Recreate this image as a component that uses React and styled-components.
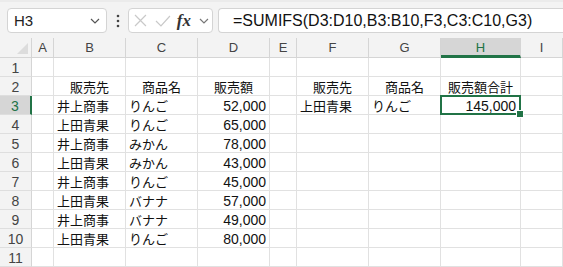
import styled, { createGlobalStyle } from 'styled-components'

const GlobalStyle = createGlobalStyle`
  html, body { margin: 0; padding: 0; background: #fff; }
  body { overflow: hidden; }
`

const GREEN = '#217346'
const COLS = ['A', 'B', 'C', 'D', 'E', 'F', 'G', 'H', 'I']

const Page = styled.div`
  width: 563px;
  height: 267px;
  overflow: hidden;
  background: #fff;
  font-family: 'Liberation Sans', Arial, sans-serif;
`

const Toolbar = styled.div`
  display: flex;
  align-items: center;
  height: 38px;
  box-sizing: border-box;
  padding: 7px 0 6px 7px;
  background: #f3f3f3;
  border-top: 2px solid #ebebeb;
`

const Box = styled.div`
  display: flex;
  align-items: center;
  height: 25px;
  box-sizing: border-box;
  background: #fff;
  border: 1px solid #d4d4d4;
  border-radius: 4px;
`

const NameBox = styled(Box)`
  width: 100px;
  padding: 0 6px 0 6px;
  justify-content: space-between;
  font-size: 15px;
  color: #222;
`

const Dots = styled.div`
  width: 21px;
  display: flex;
  justify-content: center;
`

const FxBox = styled(Box)`
  width: 85px;
  padding: 0 3px 0 5px;
  gap: 8px;
`

const Fx = styled.span`
  font-family: 'Liberation Serif', 'DejaVu Serif', serif;
  font-style: italic;
  font-weight: bold;
  font-size: 17px;
  color: #333;
  margin-left: -2px;
`

const FormulaBox = styled(Box)`
  flex: 1;
  margin-left: 5px;
  padding-left: 14px;
  border-right: none;
  border-radius: 4px 0 0 4px;
  font-size: 16px;
  color: #111;
`

const Grid = styled.div`
  display: grid;
  grid-template-columns: 32px 22px 72px 72px 72px 27px 72px 72px 80px 1fr;
  grid-template-rows: 20px repeat(11, 19px);
`

const Corner = styled.div`
  background: #f3f3f3;
  border-right: 1px solid #d5d5d5;
  border-bottom: 1px solid #d5d5d5;
  position: relative;
  &::after {
    content: '';
    position: absolute;
    right: 3px;
    bottom: 3px;
    border-style: solid;
    border-width: 0 0 11px 11px;
    border-color: transparent transparent #dcdcdc transparent;
  }
`

const ColHead = styled.div`
  display: flex;
  align-items: center;
  justify-content: center;
  box-sizing: border-box;
  background: ${p => (p.$active ? '#d6d6d6' : '#f3f3f3')};
  border-right: 1px solid #d5d5d5;
  border-bottom: ${p => (p.$active ? `3px solid ${GREEN}` : '1px solid #d5d5d5')};
  font-size: 13px;
  color: ${p => (p.$active ? GREEN : '#444')};
  padding-top: ${p => (p.$active ? '2px' : '0')};
`

const RowHead = styled.div`
  display: flex;
  align-items: center;
  justify-content: center;
  box-sizing: border-box;
  background: ${p => (p.$active ? '#d6d6d6' : '#f3f3f3')};
  border-right: ${p => (p.$active ? `2px solid ${GREEN}` : '1px solid #d5d5d5')};
  border-bottom: 1px solid #dedede;
  font-size: 14px;
  color: ${p => (p.$active ? GREEN : '#444')};
  padding-top: 1px;
`

const Cell = styled.div`
  display: flex;
  align-items: center;
  box-sizing: border-box;
  justify-content: ${p => (p.$align === 'right' ? 'flex-end' : p.$align === 'center' ? 'center' : 'flex-start')};
  padding: 1px 3px 0 3px;
  border-right: 1px solid #e1e1e1;
  border-bottom: 1px solid #e1e1e1;
  font-family: ${p => (p.$num ? "'Liberation Sans', Arial, sans-serif" : "'Noto Sans CJK JP', sans-serif")};
  font-size: ${p => (p.$num ? '14px' : '13px')};
  color: #111;
  white-space: nowrap;
  position: relative;
`

const Selected = styled(Cell)`
  border: 2px solid ${GREEN};
  margin: -1px 0 0 -1px;
  padding-right: 3px;
  &::after {
    content: '';
    position: absolute;
    right: -5px;
    bottom: -5px;
    width: 6px;
    height: 6px;
    background: ${GREEN};
    border: 1px solid #fff;
    z-index: 1;
  }
`

const Chevron = ({ color = '#555' }) => (
  <svg width="10" height="6" viewBox="0 0 10 6">
    <path d="M1 1 L5 5 L9 1" fill="none" stroke={color} strokeWidth="1.2" />
  </svg>
)

const rows = [
  [],
  ['', '販売先', '商品名', '販売額', '', '販売先', '商品名', '販売額合計'],
  ['', '井上商事', 'りんご', '52,000', '', '上田青果', 'りんご', '145,000'],
  ['', '上田青果', 'りんご', '65,000'],
  ['', '井上商事', 'みかん', '78,000'],
  ['', '上田青果', 'みかん', '43,000'],
  ['', '井上商事', 'りんご', '45,000'],
  ['', '上田青果', 'バナナ', '57,000'],
  ['', '井上商事', 'バナナ', '49,000'],
  ['', '上田青果', 'りんご', '80,000'],
  [],
]

function renderCell(r, c, value) {
  const key = `${r}-${c}`
  const isNum = /^[\d,]+$/.test(value || '')
  if (r === 2 && c === 7) {
    return (
      <Selected key={key} $align="right" $num>
        {value}
      </Selected>
    )
  }
  const align = r === 1 ? 'center' : isNum ? 'right' : 'left'
  return (
    <Cell key={key} $align={align} $num={isNum}>
      {value}
    </Cell>
  )
}

export default function App() {
  return (
    <Page>
      <GlobalStyle />
      <Toolbar>
        <NameBox>
          <span>H3</span>
          <Chevron />
        </NameBox>
        <Dots>
          <svg width="4" height="14" viewBox="0 0 4 14">
            <circle cx="2" cy="2" r="1.3" fill="#444" />
            <circle cx="2" cy="7" r="1.3" fill="#444" />
            <circle cx="2" cy="12" r="1.3" fill="#444" />
          </svg>
        </Dots>
        <FxBox>
          <svg width="13" height="13" viewBox="0 0 13 13">
            <path d="M1 1 L12 12 M12 1 L1 12" stroke="#c9c9c9" strokeWidth="1.2" fill="none" />
          </svg>
          <svg width="16" height="12" viewBox="0 0 16 12">
            <path d="M1 6 L6 11 L15 1" stroke="#c9c9c9" strokeWidth="1.2" fill="none" />
          </svg>
          <Fx>fx</Fx>
          <Chevron color="#777" />
        </FxBox>
        <FormulaBox>=SUMIFS(D3:D10,B3:B10,F3,C3:C10,G3)</FormulaBox>
      </Toolbar>
      <Grid>
        <Corner />
        {COLS.map(col => (
          <ColHead key={col} $active={col === 'H'}>
            {col}
          </ColHead>
        ))}
        {rows.map((row, r) => [
          <RowHead key={`h${r}`} $active={r === 2}>
            {r + 1}
          </RowHead>,
          ...COLS.map((_, c) => renderCell(r, c, row[c])),
        ])}
      </Grid>
    </Page>
  )
}
